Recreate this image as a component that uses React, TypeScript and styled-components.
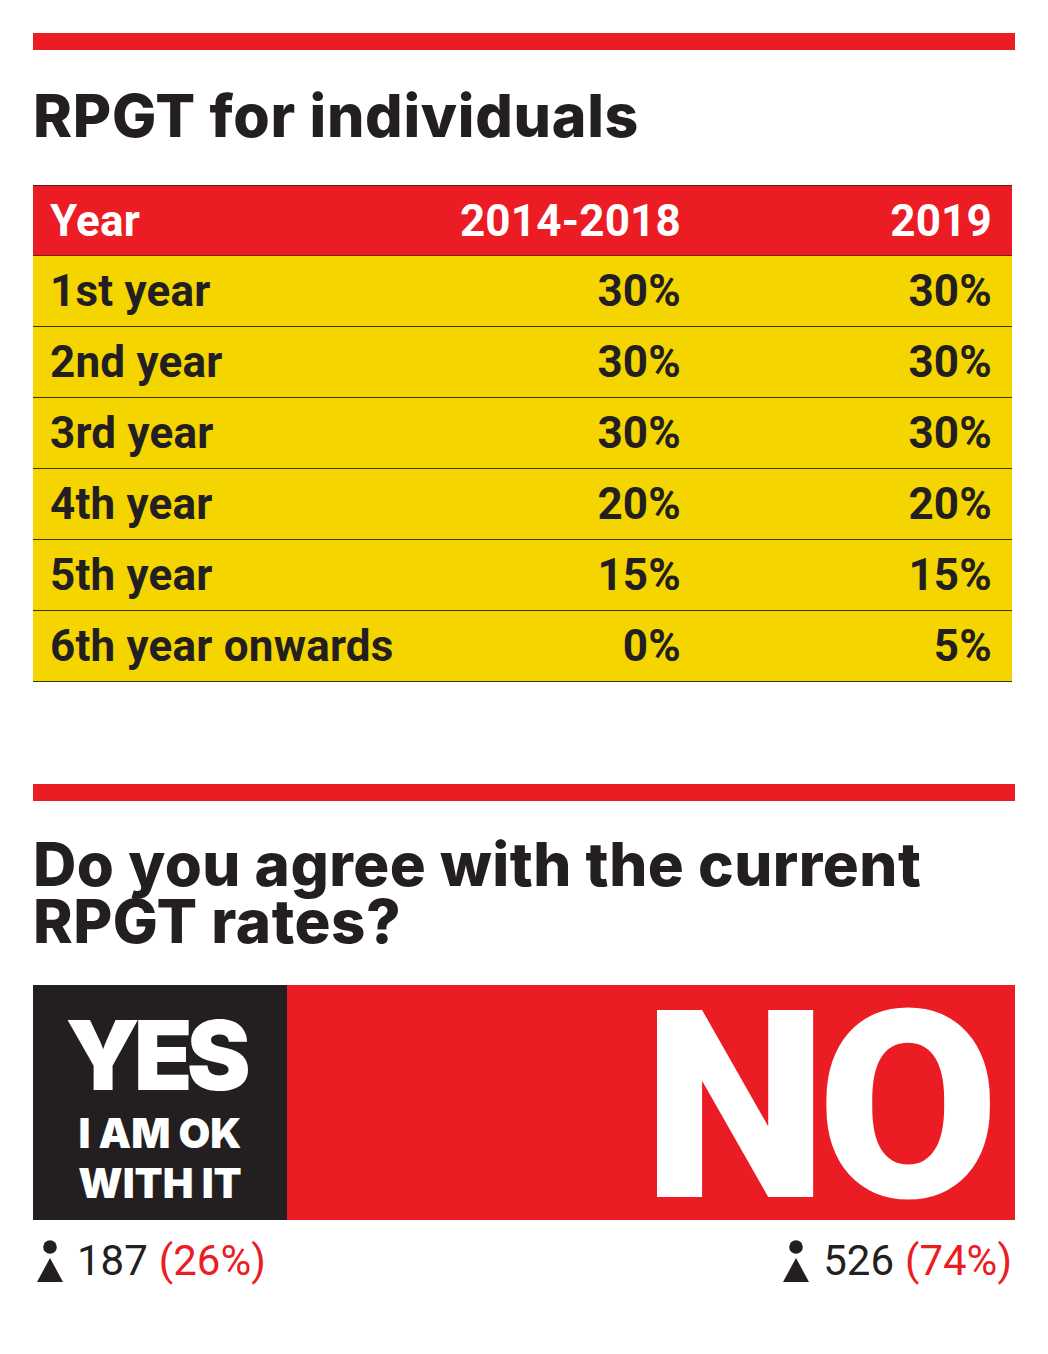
import React from "react";
import styled, { createGlobalStyle } from "styled-components";

const RED = "#ec1c24";
const YELLOW = "#f5d500";
const INK = "#231f20";

const GlobalStyle = createGlobalStyle`
  html, body { margin: 0; padding: 0; background: #ffffff; }
  body { font-family: "Inter", "Noto Sans", sans-serif; color: ${INK}; }
  * { box-sizing: border-box; }
`;

const Page = styled.div`
  width: 1048px;
  padding: 33px 33px 40px 33px;
`;

const RedRule = styled.div<{ $top?: number }>`
  height: 17px;
  background: ${RED};
  margin-top: ${(p) => p.$top ?? 0}px;
`;

const Title = styled.h1`
  margin: 37px 0 0 0;
  font-family: "Inter", sans-serif;
  font-weight: 800;
  font-size: 59px;
  line-height: 58px;
  letter-spacing: 0.7px;
  color: ${INK};
`;

const Table = styled.div`
  margin-top: 40px;
  width: 979px;
  font-family: "Roboto", "Liberation Sans", sans-serif;
  font-weight: 700;
  font-size: 44px;
  line-height: 44px;
`;

const Row = styled.div<{ $head?: boolean }>`
  display: grid;
  grid-template-columns: 1fr 240px 311px;
  align-items: center;
  height: 71px;
  padding: 0 20px 0 17px;
  background: ${(p) => (p.$head ? RED : YELLOW)};
  color: ${(p) => (p.$head ? "#ffffff" : INK)};
  border-top: ${(p) => (p.$head ? "1px solid #6b1a1c" : "none")};
  border-bottom: 1.5px solid ${(p) => (p.$head ? "#7a1a10" : "#3d3500")};
  letter-spacing: 0.2px;
`;

const Cell = styled.div<{ $right?: boolean }>`
  text-align: ${(p) => (p.$right ? "right" : "left")};
  white-space: nowrap;
`;

const Question = styled.h2`
  margin: 35px 0 0 0;
  font-family: "Inter", sans-serif;
  font-weight: 800;
  font-size: 60px;
  line-height: 57px;
  letter-spacing: 0.5px;
  color: ${INK};
`;

const QLine = styled.span`
  display: block;
  white-space: nowrap;
`;

const Poll = styled.div`
  margin-top: 35px;
  display: grid;
  grid-template-columns: 254px 1fr;
  height: 235px;
`;

const YesPanel = styled.div`
  background: ${INK};
  color: #ffffff;
  display: flex;
  flex-direction: column;
  align-items: center;
  padding-top: 22px;
  font-family: "Inter", sans-serif;
  font-weight: 900;
`;

const YesWord = styled.div`
  font-size: 96px;
  line-height: 96px;
  letter-spacing: -6px;
  margin: 0 10px 5px 0;
`;

const YesLine = styled.div`
  font-size: 41px;
  line-height: 50px;
  letter-spacing: 0;
  text-align: center;
`;

const NoPanel = styled.div`
  background: ${RED};
  color: #ffffff;
  display: flex;
  justify-content: flex-end;
  align-items: flex-start;
  padding: 27px 23px 0 0;
`;

const NoWord = styled.div`
  font-family: "Roboto", "Inter", sans-serif;
  font-weight: 900;
  font-size: 263px;
  line-height: 190px;
  letter-spacing: -10px;
  margin-right: 3px;
`;

const Footer = styled.div`
  margin-top: 17px;
  display: flex;
  justify-content: space-between;
  padding: 0 3px 0 4px;
`;

const Stat = styled.div`
  display: flex;
  align-items: flex-end;
  font-family: "Roboto", "Liberation Sans", sans-serif;
  font-weight: 400;
  font-size: 42px;
  line-height: 48px;
  color: ${INK};
  white-space: nowrap;
`;

const Count = styled.span`
  margin: 0 11px 0 14px;
`;

const Pct = styled.span`
  color: ${RED};
`;

const PersonIcon = styled.svg`
  width: 26px;
  height: 42px;
  flex: none;
  margin-bottom: 3px;
`;

const Person = () => (
  <PersonIcon viewBox="0 0 26 42">
    <circle cx="13" cy="7" r="6.8" fill={INK} />
    <polygon points="13,18 26,42 0,42" fill={INK} />
  </PersonIcon>
);

const rows: [string, string, string][] = [
  ["1st year", "30%", "30%"],
  ["2nd year", "30%", "30%"],
  ["3rd year", "30%", "30%"],
  ["4th year", "20%", "20%"],
  ["5th year", "15%", "15%"],
  ["6th year onwards", "0%", "5%"],
];

const stats = [
  { count: "187", pct: "(26%)" },
  { count: "526", pct: "(74%)" },
];

export default function App() {
  return (
    <>
      <GlobalStyle />
      <Page>
        <RedRule />
        <Title>RPGT for individuals</Title>
        <Table>
          <Row $head>
            <Cell>Year</Cell>
            <Cell $right>2014-2018</Cell>
            <Cell $right>2019</Cell>
          </Row>
          {rows.map(([a, b, c]) => (
            <Row key={a}>
              <Cell>{a}</Cell>
              <Cell $right>{b}</Cell>
              <Cell $right>{c}</Cell>
            </Row>
          ))}
        </Table>
        <RedRule $top={102} />
        <Question>
          <QLine>Do you agree with the current</QLine>
          <QLine>RPGT rates?</QLine>
        </Question>
        <Poll>
          <YesPanel>
            <YesWord>YES</YesWord>
            <YesLine>I AM OK</YesLine>
            <YesLine>WITH IT</YesLine>
          </YesPanel>
          <NoPanel>
            <NoWord>NO</NoWord>
          </NoPanel>
        </Poll>
        <Footer>
          {stats.map((s) => (
            <Stat key={s.count}>
              <Person />
              <Count>{s.count}</Count>
              <Pct>{s.pct}</Pct>
            </Stat>
          ))}
        </Footer>
      </Page>
    </>
  );
}
